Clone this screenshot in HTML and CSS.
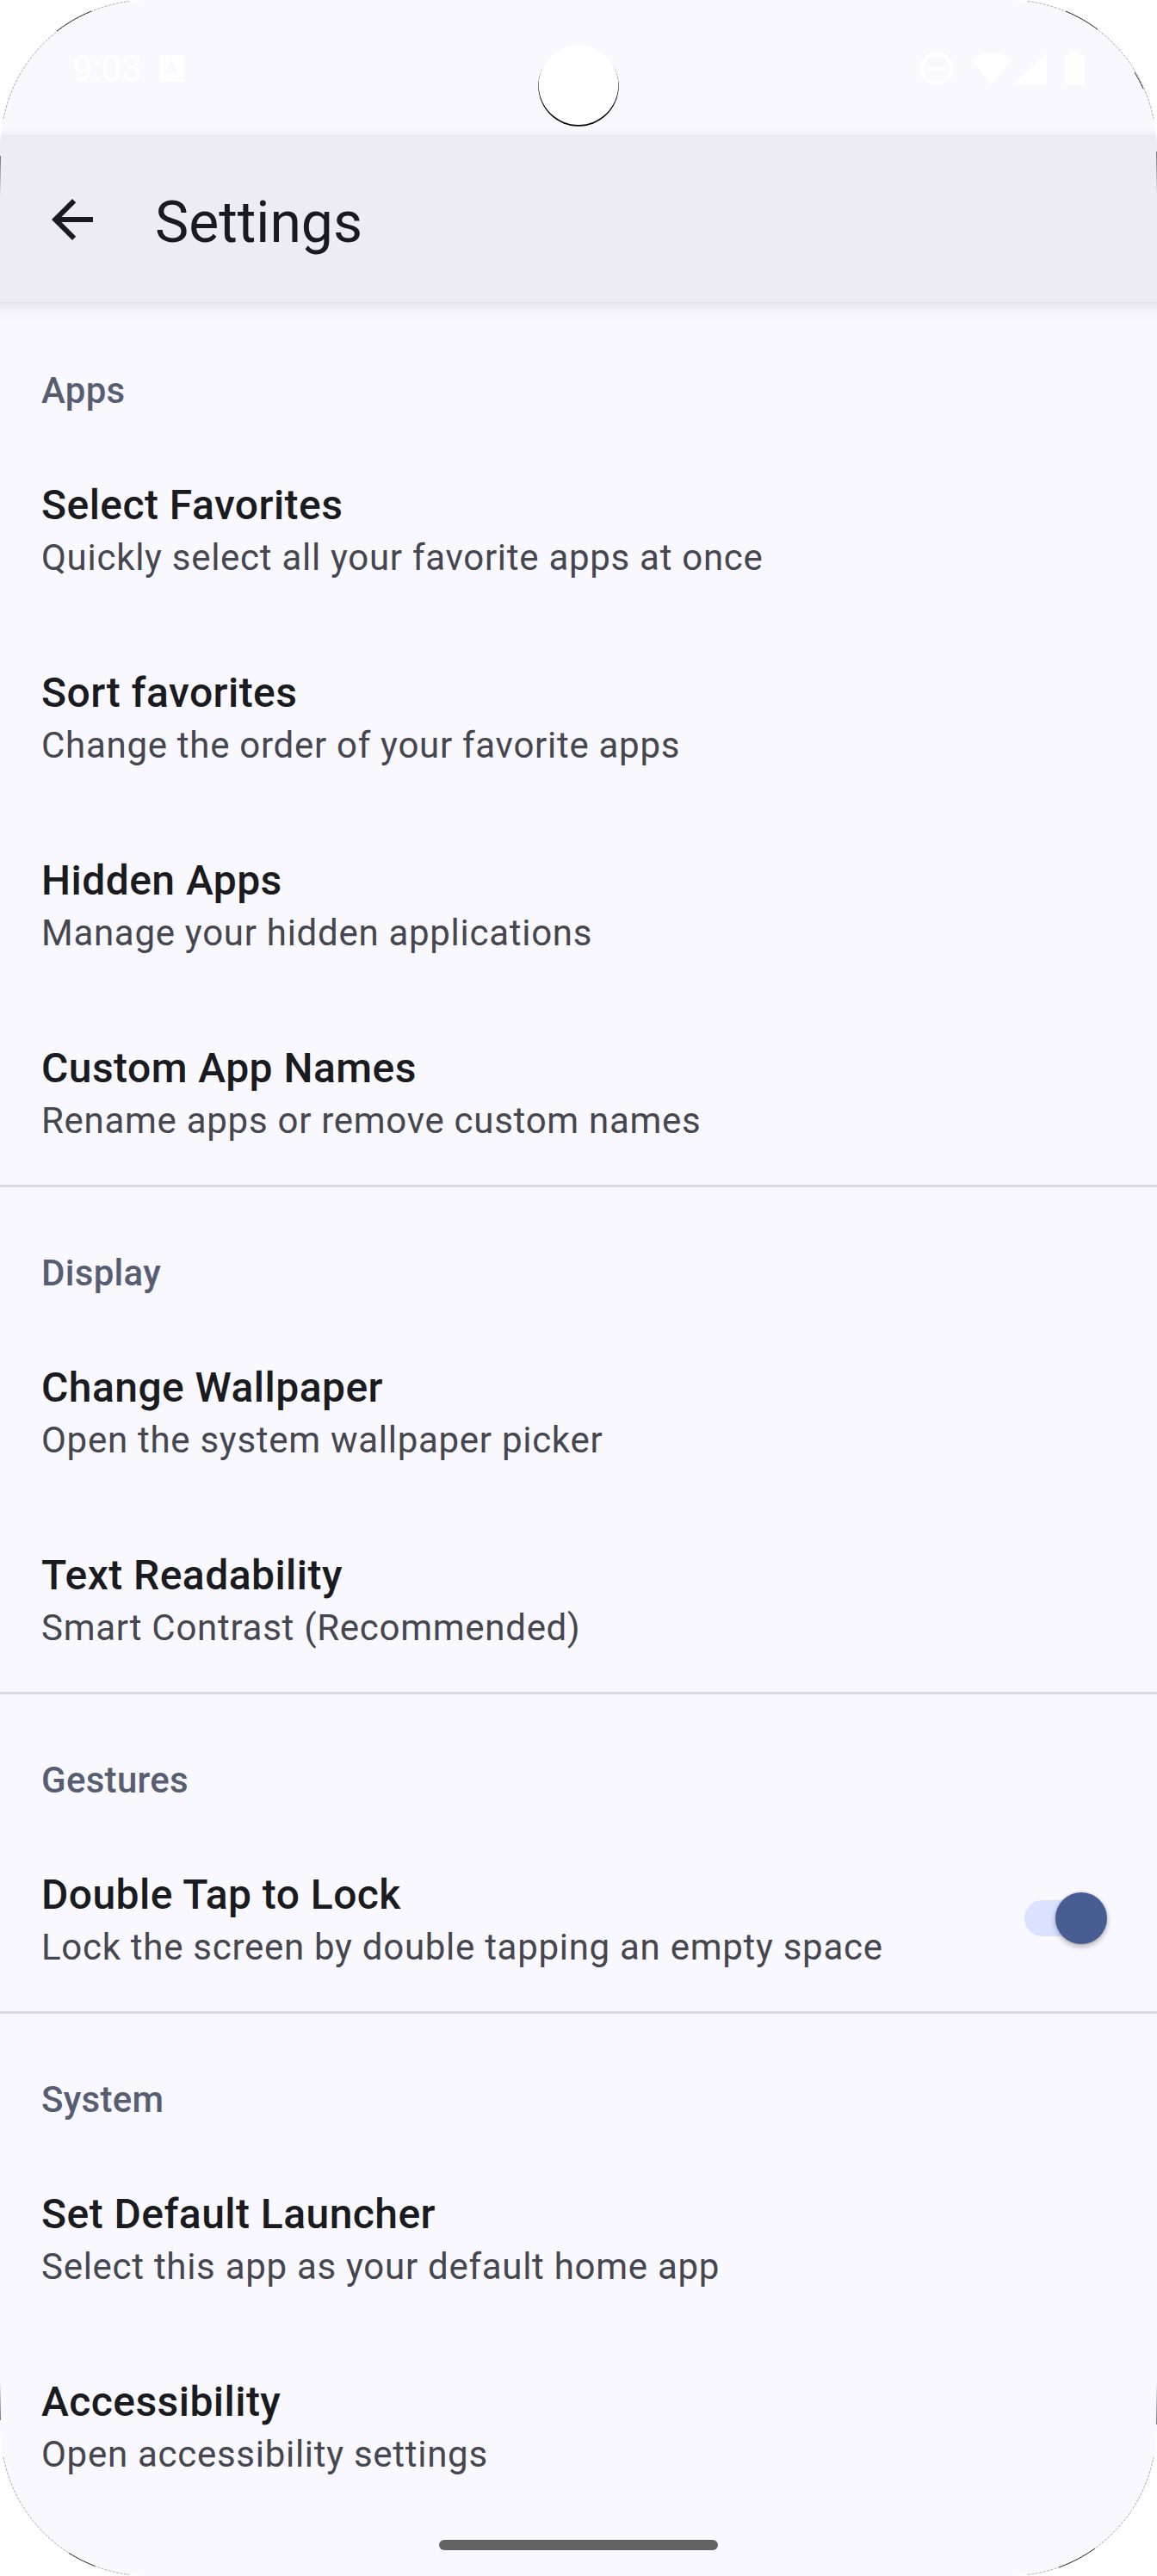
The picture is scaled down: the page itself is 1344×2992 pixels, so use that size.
FILE: index.html
```html
<!DOCTYPE html>
<html lang="en">
<head>
<meta charset="utf-8">
<title>Settings</title>
<link rel="stylesheet" href="styles.css">
</head>
<body>
<div class="screen">
  <header class="status-bar">
    <span class="clock">9:03</span>
    <svg class="notification" width="28" height="31" viewBox="0 0 28 31"><rect width="28" height="31" rx="3" fill="#fff"/><path d="M8.500 21.500L14 9L19.500 21.500M10.500 18.500H17.500" fill="none" stroke="#f9f8ff" stroke-width="3.500"/><g fill="#f9f8ff"><circle cx="16.500" cy="27" r="1.300"/><circle cx="20.500" cy="27" r="1.300"/><circle cx="24.500" cy="27" r="1.300"/></g></svg>
    <svg class="system-icons" width="192" height="40" viewBox="0 0 192 40">
      <circle cx="19" cy="19.500" r="17" fill="none" stroke="#fff" stroke-width="4"/>
      <path d="M9.500 19.500H28.500" stroke="#fff" stroke-width="4"/>
      <path d="M60.300 10.500Q82.500-9 105 10.500L82.500 38Z" fill="#fff"/>
      <path d="M108.500 38L147 0.500V35.500Q147 38 144.500 38Z" fill="#fff"/>
      <path d="M174.500 0H184.500V4H188.500Q191 4 191 6.500V36Q191 38.500 188.500 38.500H170.500Q168 38.500 168 36V6.500Q168 4 170.500 4H174.500Z" fill="#fff"/>
    </svg>
  </header>
  <div class="app-bar">
    <svg class="back" width="72" height="72" viewBox="0 0 24 24"><path d="M20 11H7.830l5.590-5.590L12 4l-8 8 8 8 1.410-1.410L7.830 13H20v-2z" fill="#1a1b20"/></svg>
    <h1 class="title">Settings</h1>
  </div>
  <main class="content">
    <section class="group">
      <h2 class="group-title">Apps</h2>
      <div class="item"><div class="label">Select Favorites</div><div class="summary">Quickly select all your favorite apps at once</div></div>
      <div class="item"><div class="label">Sort favorites</div><div class="summary">Change the order of your favorite apps</div></div>
      <div class="item"><div class="label">Hidden Apps</div><div class="summary">Manage your hidden applications</div></div>
      <div class="item"><div class="label">Custom App Names</div><div class="summary">Rename apps or remove custom names</div></div>
    </section>
    <section class="group">
      <h2 class="group-title">Display</h2>
      <div class="item"><div class="label">Change Wallpaper</div><div class="summary">Open the system wallpaper picker</div></div>
      <div class="item"><div class="label">Text Readability</div><div class="summary">Smart Contrast (Recommended)</div></div>
    </section>
    <section class="group">
      <h2 class="group-title">Gestures</h2>
      <div class="item with-switch">
        <div><div class="label">Double Tap to Lock</div><div class="summary">Lock the screen by double tapping an empty space</div></div>
        <div class="switch"><div class="thumb"></div></div>
      </div>
    </section>
    <section class="group">
      <h2 class="group-title">System</h2>
      <div class="item"><div class="label">Set Default Launcher</div><div class="summary">Select this app as your default home app</div></div>
      <div class="item"><div class="label">Accessibility</div><div class="summary">Open accessibility settings</div></div>
    </section>
  </main>
  <div class="nav-handle"></div>
</div>
<svg class="bezel" width="1344" height="2992" viewBox="0 0 1344 2992">
  <defs>
    <linearGradient id="fade-down" x1="0" y1="0" x2="0" y2="1"><stop offset="0" stop-color="#777"/><stop offset="1" stop-color="#777" stop-opacity="0"/></linearGradient>
    <linearGradient id="fade-up" x1="0" y1="1" x2="0" y2="0"><stop offset="0" stop-color="#777"/><stop offset="1" stop-color="#777" stop-opacity="0"/></linearGradient>
  </defs>
  <circle cx="672" cy="100" r="46.700" fill="#000"/>
  <circle cx="672" cy="98.600" r="46.300" fill="#fff"/>
  <g class="edge">
    <path d="M4 138A171 171 0 0 1 150 1.500"/>
    <path d="M1194 1.500A171 171 0 0 1 1340 138"/>
    <path d="M4 2854A171 171 0 0 0 150 2990.500"/>
    <path d="M1194 2990.500A171 171 0 0 0 1340 2854"/>
  </g>
  <g class="edge-dark">
    <path d="M66 36A171 171 0 0 1 106 13"/>
    <path d="M1238 13A171 171 0 0 1 1275 34"/>
    <path d="M1318 84A171 171 0 0 1 1328 103"/>
    <path d="M80 2965.500A171 171 0 0 0 110 2980.500"/>
    <path d="M1230 2982A171 171 0 0 0 1272 2960"/>
  </g>
  <rect x="0" y="181" width="1" height="46" fill="url(#fade-down)"/>
  <rect x="1343" y="176" width="1" height="51" fill="url(#fade-down)"/>
  <rect x="0" y="2766" width="1" height="45" fill="url(#fade-up)"/>
  <rect x="1343" y="2766" width="1" height="50" fill="url(#fade-up)"/>
</svg>
</body>
</html>
```
FILE: styles.css
```css
body {
  margin: 0;
  background: #fff;
  font-family: Roboto, sans-serif;
}

.screen {
  display: flex;
  flex-direction: column;
  width: 1344px;
  height: 2992px;
  border-radius: 171px;
  overflow: hidden;
  background: #f9f8ff;
}

.status-bar {
  box-sizing: border-box;
  display: flex;
  align-items: center;
  height: 159px;
  padding: 0 83px 0 84px;
  color: #fff;
}

.clock {
  width: 101px;
  font-size: 42px;
  line-height: 48px;
}

.system-icons {
  margin-left: auto;
}

.app-bar {
  box-sizing: border-box;
  display: flex;
  align-items: center;
  gap: 60px;
  height: 192px;
  flex: none;
  margin: 0 -30px;
  padding: 0 78px;
  background: #edecf2;
  box-shadow: 0 3px 18px rgba(0, 0, 0, 0.1), 0 0 3px rgba(0, 0, 0, 0.12);
}

.title {
  margin: 7px 0 0;
  color: #1a1b20;
  font-size: 66px;
  font-weight: 400;
  line-height: 84px;
}

.content {
  padding-top: 3px;
}

.group + .group {
  border-top: 3px solid #dbd9e0;
}

.group-title {
  margin: 0;
  padding: 70px 48px 21px;
  color: #575e71;
  font-size: 42px;
  font-weight: 500;
  line-height: 59px;
  letter-spacing: 0.3px;
}

.item {
  box-sizing: border-box;
  height: 218px;
  padding: 50px 48px 46px;
}

.with-switch {
  display: flex;
  align-items: center;
  justify-content: space-between;
  padding-right: 58px;
}

.label {
  color: #1a1b20;
  font-size: 48px;
  font-weight: 500;
  line-height: 65px;
  letter-spacing: 0.45px;
}

.summary {
  color: #45464f;
  font-size: 42px;
  line-height: 57px;
  letter-spacing: 0.72px;
}

.switch {
  display: flex;
  align-items: center;
  justify-content: flex-end;
  width: 96px;
  height: 42px;
  margin-bottom: 2px;
  border-radius: 21px;
  background: linear-gradient(90deg, #dae2ff 75px, transparent 75px);
}

.thumb {
  width: 60px;
  height: 60px;
  flex: none;
  border-radius: 50%;
  background: #485d92;
  box-shadow: 0 3px 6px rgba(0, 0, 0, 0.28), 0 0 3px rgba(0, 0, 0, 0.15);
}

.nav-handle {
  position: absolute;
  top: 2950px;
  left: 510px;
  width: 324px;
  height: 12px;
  border-radius: 6px;
  background: #636366;
}

.bezel {
  position: absolute;
  top: 0;
  left: 0;
}

.edge path {
  fill: none;
  stroke: #777;
  stroke-width: 0.6;
  stroke-dasharray: 3 1.5;
}

.edge-dark path {
  fill: none;
  stroke: #222;
  stroke-width: 0.9;
}
```
